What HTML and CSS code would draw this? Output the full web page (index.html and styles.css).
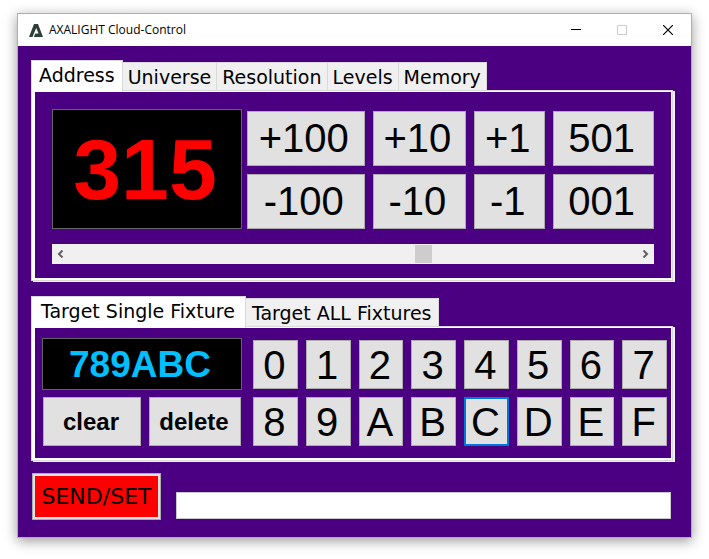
FILE: index.html
```html
<!DOCTYPE html>
<html lang="en">
<head>
    <meta charset="UTF-8">
    <meta name="viewport" content="width=device-width, initial-scale=1.0">
    <title>AXALIGHT Cloud-Control</title>
    <link rel="stylesheet" href="styles.css">
</head>
<body>
    <div class="window">
        <header class="titlebar">
            <svg class="logo" width="14" height="13" viewBox="0 0 14 13">
                <path fill="#2d4038" d="M5 0h4l5 13H4.800L6.300 9.500H9.600L7.200 4 3.500 13H0z"/>
            </svg>
            <h1 class="title">AXALIGHT Cloud-Control</h1>
            <button class="win_btn" aria-label="Minimize">
                <svg width="10" height="10" viewBox="0 0 10 10"><path d="M0 4.500h10" stroke="#000"/></svg>
            </button>
            <button class="win_btn" aria-label="Maximize" disabled>
                <svg width="10" height="10" viewBox="0 0 10 10"><path d="M.5.5h9v9h-9z" stroke="#ccc" fill="none"/></svg>
            </button>
            <button class="win_btn" aria-label="Close">
                <svg width="10" height="10" viewBox="0 0 10 10"><path d="M0 0l10 10M10 0L0 10" stroke="#000" stroke-width="1.200"/></svg>
            </button>
        </header>

        <main class="client">
            <section class="tabs">
                <div class="tab_list" role="tablist">
                    <button class="tab on" role="tab" aria-selected="true">Address</button>
                    <button class="tab" role="tab">Universe</button>
                    <button class="tab" role="tab">Resolution</button>
                    <button class="tab" role="tab">Levels</button>
                    <button class="tab" role="tab">Memory</button>
                </div>
                <div class="panel">
                    <div class="page address">
                        <div class="address_top">
                            <input class="display display_address" type="text" value="315" aria-label="Address" readonly>
                            <div class="steps">
                                <button class="btn step">+100</button>
                                <button class="btn step">+10</button>
                                <button class="btn step">+1</button>
                                <button class="btn step">501</button>
                                <button class="btn step">-100</button>
                                <button class="btn step">-10</button>
                                <button class="btn step">-1</button>
                                <button class="btn step">001</button>
                            </div>
                        </div>
                        <div class="scroll">
                            <button class="scroll_btn" aria-label="Down">
                                <svg width="7" height="8" viewBox="0 0 7 8"><path d="M5.500.5L2 4l3.500 3.500" stroke="#606060" stroke-width="2" fill="none"/></svg>
                            </button>
                            <input class="scroll_range" type="range" min="1" max="501" value="315" aria-label="Address">
                            <button class="scroll_btn" aria-label="Up">
                                <svg width="7" height="8" viewBox="0 0 7 8"><path d="M1.500.5L5 4 1.500 7.500" stroke="#606060" stroke-width="2" fill="none"/></svg>
                            </button>
                        </div>
                    </div>
                </div>
            </section>

            <section class="tabs">
                <div class="tab_list tab_list_wide" role="tablist">
                    <button class="tab on" role="tab" aria-selected="true">Target Single Fixture</button>
                    <button class="tab" role="tab">Target ALL Fixtures</button>
                </div>
                <div class="panel">
                    <div class="page target">
                        <div class="target_left">
                            <input class="display display_target" type="text" value="789ABC" aria-label="Fixture" readonly>
                            <div class="edit">
                                <button class="btn edit_btn">clear</button>
                                <button class="btn edit_btn">delete</button>
                            </div>
                        </div>
                        <div class="keys">
                            <button class="btn key">0</button>
                            <button class="btn key">1</button>
                            <button class="btn key">2</button>
                            <button class="btn key">3</button>
                            <button class="btn key">4</button>
                            <button class="btn key">5</button>
                            <button class="btn key">6</button>
                            <button class="btn key">7</button>
                            <button class="btn key">8</button>
                            <button class="btn key">9</button>
                            <button class="btn key">A</button>
                            <button class="btn key">B</button>
                            <button class="btn key on">C</button>
                            <button class="btn key">D</button>
                            <button class="btn key">E</button>
                            <button class="btn key">F</button>
                        </div>
                    </div>
                </div>
            </section>

            <footer class="bottom">
                <button class="send">SEND/SET</button>
                <input class="message" type="text" aria-label="Message">
            </footer>
        </main>
    </div>
</body>
</html>
```

FILE: styles.css
```css
* {
    box-sizing: border-box;
}
body {
    margin: 0;
    padding: 13px 17px 21px;
    background-color: #fff;
    font-family: "Liberation Sans", Arial, sans-serif;
}
button, input {
    margin: 0;
    padding: 0;
    font-family: inherit;
    color: #000;
}
.window {
    border: 1px solid violet;
    box-shadow: 0 3px 12px rgba(0,0,0,.4);
}

/* title bar */
.titlebar {
    display: flex;
    align-items: center;
    height: 32px;
    padding-left: 11px;
    background-color: #fff;
}
.title {
    flex: 1;
    margin: 0 0 0 6px;
    font: 12px/16px "Open Sans", "Noto Sans", sans-serif;
}
.win_btn {
    display: flex;
    align-items: center;
    justify-content: center;
    width: 46px;
    height: 30px;
    border: 0;
    background: none;
}

.client {
    padding: 14px 16px 17px 13px;
    background-color: #4b0082;
}

/* tabs */
.tabs {
    margin-bottom: 15px;
}
.tabs + .tabs {
    margin-bottom: 12px;
}
.tab_list {
    display: flex;
    align-items: flex-end;
}
.tab {
    height: 28px;
    padding: 0 5px;
    border: 1px solid #d9d9d9;
    border-width: 1px 1px 0 0;
    background-color: #f0f0f0;
    font: 19px/26px "DejaVu Sans", Verdana, sans-serif;
}
.tab.on {
    position: relative;
    height: 32px;
    margin-bottom: -2px;
    padding: 0 7px 4px;
    border-width: 1px 1px 0 1px;
    background-color: #fff;
}
.tab_list_wide .tab {
    padding: 0 6px;
}
.tab_list_wide .tab.on {
    padding: 0 10px 4px 9px;
}
.panel {
    margin-right: 2px;
    padding: 1px 1px 2px 3px;
    border: 1px solid #d9d9d9;
    background-color: #fff;
    box-shadow: 2px 1px 0 #f0f0f0;
}
.page {
    background-color: #4b0082;
}

.display {
    border: 1px solid #646464;
    background-color: #000;
    font-weight: bold;
    text-align: center;
}
.btn {
    border: 1px solid #adadad;
    background-color: #e1e1e1;
}

/* address */
.address {
    padding: 17px 17px 14px;
}
.address_top {
    display: flex;
    gap: 5px;
}
.display_address {
    width: 190px;
    height: 120px;
    padding-right: 4px;
    color: #f00;
    font-size: 86px;
}
.steps {
    flex: 1;
    display: grid;
    grid-template-columns: 117fr 93fr 71fr 100fr;
    gap: 8px;
    padding-top: 2px;
}
.step {
    height: 55px;
    padding: 0 4px 2px 0;
    font-size: 40px;
    line-height: 44px;
}
.scroll {
    display: flex;
    height: 20px;
    margin-top: 15px;
    border: 1px solid #f0f0f0;
    border-width: 1px 0;
    background-color: #f0f0f0;
}
.scroll_btn {
    display: flex;
    align-items: center;
    justify-content: center;
    width: 17px;
    border: 0;
    background: none;
}
.scroll_range {
    flex: 1;
    min-width: 0;
    height: 18px;
    appearance: none;
    background: none;
}
.scroll_range::-webkit-slider-thumb {
    appearance: none;
    width: 17px;
    height: 18px;
    background-color: #cdcdcd;
}

/* target */
.target {
    display: flex;
    gap: 11px;
    padding: 10px 4px 12px 7px;
}
.target_left {
    width: 200px;
}
.display_target {
    display: block;
    width: 100%;
    height: 52px;
    padding: 2px 4px 0 0;
    color: #00bfff;
    font-size: 37px;
}
.edit {
    display: grid;
    grid-template-columns: 98fr 92fr;
    gap: 8px;
    margin-top: 7px;
    padding: 0 1px;
}
.edit_btn {
    height: 49px;
    padding-right: 2px;
    font-size: 24px;
    font-weight: bold;
}
.keys {
    flex: 1;
    display: grid;
    grid-template-columns: repeat(8, 1fr);
    gap: 8px;
    padding-top: 2px;
}
.key {
    height: 49px;
    padding-right: 2px;
    font-size: 40px;
    line-height: 44px;
}
.key.on {
    border: 2px solid #0078d7;
}

/* bottom */
.bottom {
    display: flex;
    align-items: flex-end;
    gap: 15px;
    padding: 0 4px 0 1px;
}
.send {
    width: 129px;
    height: 47px;
    border: 1px solid #adadad;
    background-color: #f00;
    box-shadow: inset 0 0 0 2px #e1e1e1;
    font: 22px/26px "DejaVu Sans", Verdana, sans-serif;
}
.message {
    flex: 1;
    height: 27px;
    margin-bottom: 1px;
    border: 1px solid #c8c8c8;
    background-color: #fff;
    font-size: 16px;
}
```
